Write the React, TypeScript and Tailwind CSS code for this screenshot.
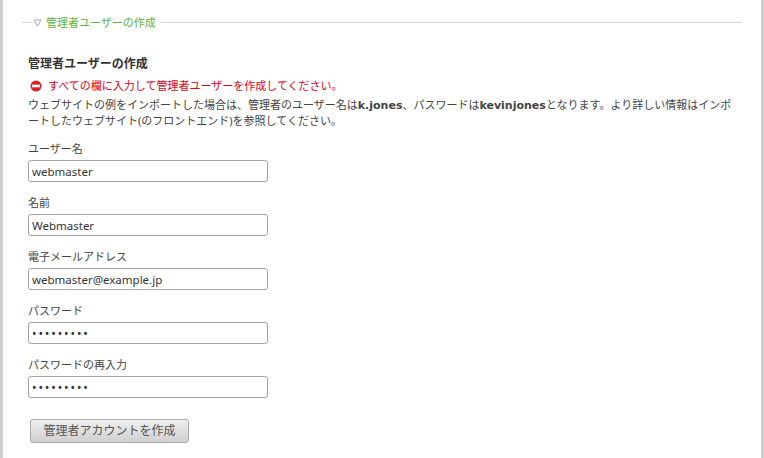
import type { ReactNode } from "react"

const font = "font-['Noto_Sans','Noto_Sans_CJK_JP',sans-serif]"

function Field({ label, value, type = "text" }: { label: string; value: string; type?: string }) {
  return (
    <div className="mb-[10px]">
      <label className="block h-[22px] text-[11px] leading-[22px] text-[#444]">{label}</label>
      <input
        type={type}
        defaultValue={value}
        className={`block h-[22px] w-[240px] rounded-[3px] border border-[#a5a5a5] bg-white px-[3px] text-[#333] outline-none ${
          type === "password" ? "text-[12px] tracking-[1.9px]" : "text-[11.5px]"
        }`}
      />
    </div>
  )
}

function Bold({ children }: { children: ReactNode }) {
  return <strong className="font-['DejaVu_Sans',sans-serif] text-[11px] font-bold leading-none">{children}</strong>
}

export default function App() {
  return (
    <div className={`${font} h-[458px] w-[764px] overflow-hidden bg-white`}>
      <div className="h-full border-x-[3px] border-[#cfcfcf] pl-[19px] pr-[19px] pt-[14px]">
        {/* Legend */}
        <div className="flex h-[16px] items-center">
          <span className="h-px w-[9px] bg-[#d4d4d4]" />
          <svg width="9" height="8" viewBox="0 0 9 8" className="ml-[2px] mt-[2px]">
            <path d="M1 1h7L4.5 7.2z" fill="none" stroke="#a8a8a8" strokeWidth="1" />
          </svg>
          <span className="ml-[4px] text-[11px] leading-none text-[#5cb33f]">管理者ユーザーの作成</span>
          <span className="ml-[5px] h-px flex-1 bg-[#d4d4d4]" />
        </div>

        <div className="pl-[6px] pt-[25px]">
          <h2 className="text-[12px] font-bold leading-[18px] text-[#333]">管理者ユーザーの作成</h2>

          <p className="mt-[5px] flex items-center text-[11px] leading-[16px] text-[#e0001a]">
            <svg width="12" height="12" viewBox="0 0 12 12" className="ml-[2px] mr-[6px]">
              <circle cx="6" cy="6" r="5.5" fill="#d8232a" />
              <rect x="2" y="4.7" width="8" height="2.6" fill="#fff" />
            </svg>
            すべての欄に入力して管理者ユーザーを作成してください。
          </p>

          <p className="mt-[3px] pr-[8px] text-[11px] leading-[16px] text-[#444]">
            ウェブサイトの例をインポートした場合は、管理者のユーザー名は<Bold>k.jones</Bold>、パスワードは<Bold>kevinjones</Bold>となります。より詳しい情報はインポートしたウェブサイト(のフロントエンド)を参照してください。
          </p>

          <div className="mt-[9px]">
            <Field label="ユーザー名" value="webmaster" />
            <Field label="名前" value="Webmaster" />
            <Field label="電子メールアドレス" value="webmaster@example.jp" />
            <Field label="パスワード" value="webmaster" type="password" />
            <Field label="パスワードの再入力" value="webmaster" type="password" />
          </div>

          <button className="ml-[2px] mt-[11px] h-[24px] w-[159px] rounded-[3px] border border-[#a9a9a9] bg-gradient-to-b from-[#f0f0f0] to-[#cfcfcf] text-[12px] text-[#555]">
            管理者アカウントを作成
          </button>
        </div>
      </div>
    </div>
  )
}
